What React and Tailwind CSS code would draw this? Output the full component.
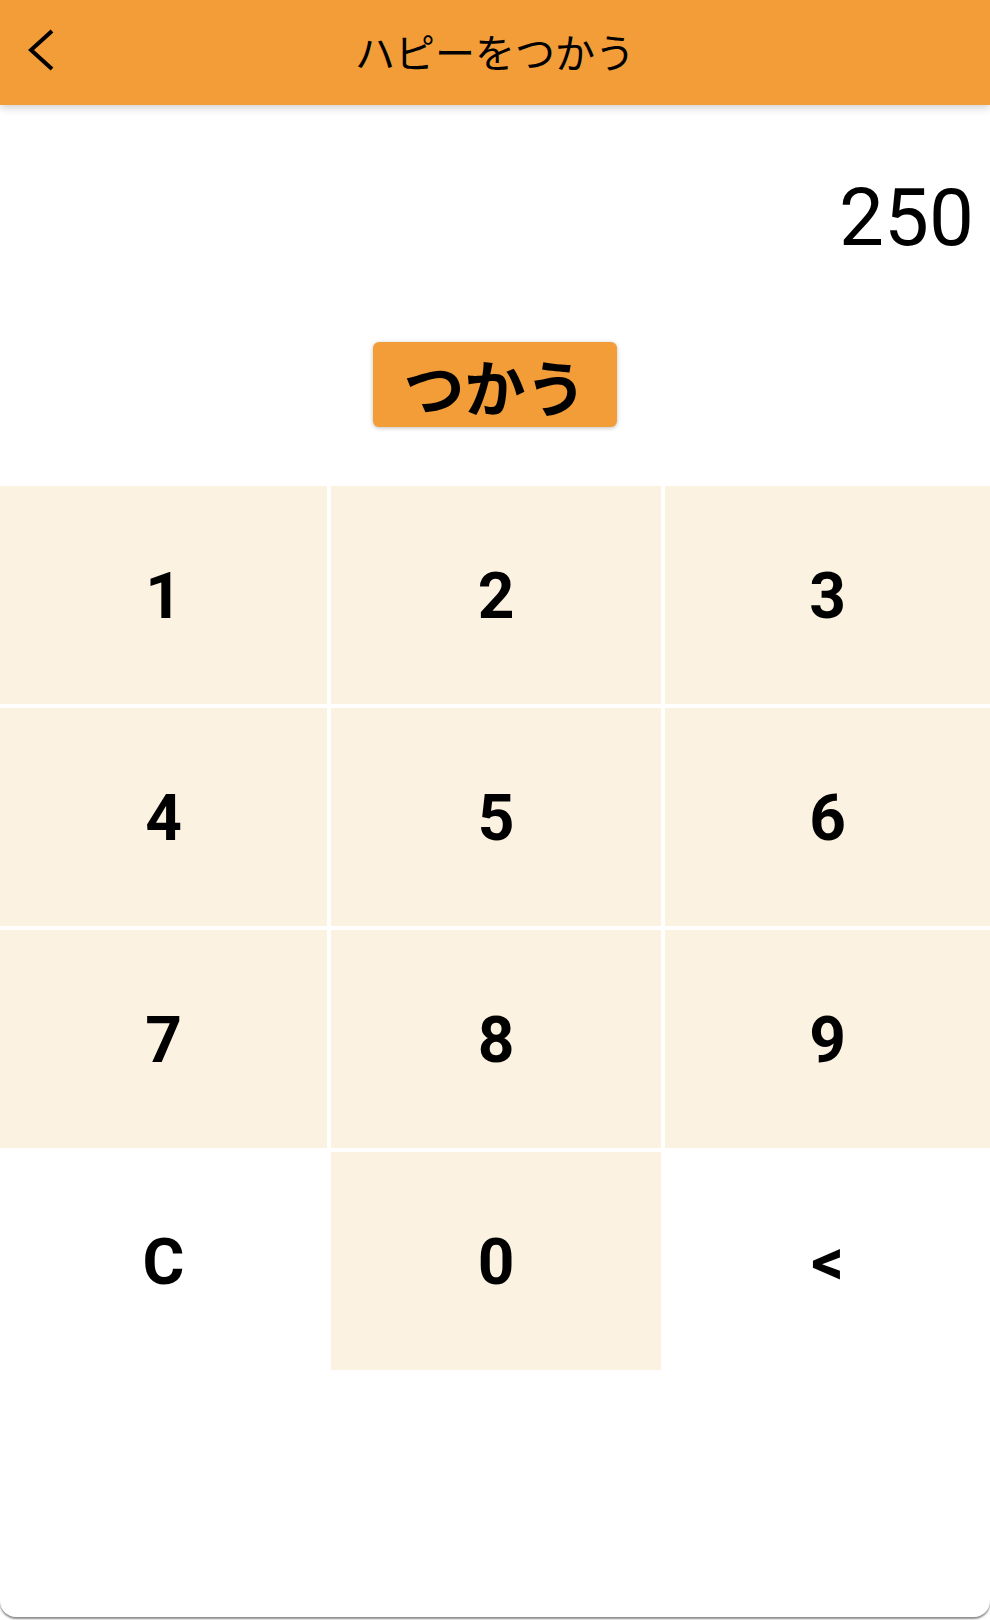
import React from "react";

const keys = [
  { label: "1", bg: true },
  { label: "2", bg: true },
  { label: "3", bg: true },
  { label: "4", bg: true },
  { label: "5", bg: true },
  { label: "6", bg: true },
  { label: "7", bg: true },
  { label: "8", bg: true },
  { label: "9", bg: true },
  { label: "C", bg: false },
  { label: "0", bg: true },
  { label: "<", bg: false },
];

export default function App() {
  return (
    <div className="w-[990px] h-[1620px] bg-white">
      <div className="h-[1617px] bg-white rounded-b-[16px] shadow-[0_2px_2px_rgba(0,0,0,0.45)] overflow-hidden flex flex-col">
        <header className="h-[105px] bg-[#F29D38] grid grid-cols-[1fr_auto_1fr] items-center shadow-[0_3px_8px_rgba(0,0,0,0.18)] relative z-10 shrink-0">
          <div className="pl-[25px] pb-[5px] flex items-center">
            <svg width="32" height="44" viewBox="0 0 32 44" fill="none">
              <path d="M27 3 L6 22 L27 41" stroke="#000" strokeWidth="4" strokeLinejoin="miter" />
            </svg>
          </div>
          <h1 className="pb-[4px] text-[40px] leading-none text-black font-normal [font-family:'Noto_Sans_CJK_JP',sans-serif]">
            ハピーをつかう
          </h1>
          <div />
        </header>

        <div className="mt-[73px] pr-[16px] text-right text-[80px] leading-none text-black [font-family:Roboto,sans-serif]">
          250
        </div>

        <div className="mt-[84px] flex justify-center">
          <button className="w-[244px] h-[85px] bg-[#F29D38] rounded-[6px] shadow-[0_1px_4px_rgba(0,0,0,0.25)] flex items-center justify-center pt-[2px] text-[61px] leading-none font-bold text-black [font-family:'Noto_Sans_CJK_JP',sans-serif]">
            つかう
          </button>
        </div>

        <div className="mt-[59px] grid grid-cols-[327px_330px_1fr] gap-[4px]">
          {keys.map((k) => (
            <div
              key={k.label}
              className={
                (k.bg ? "bg-[#FCF2E1] " : "bg-white ") +
                "h-[218px] flex items-center justify-center pt-[4px] text-[64px] leading-none font-bold text-black [font-family:Roboto,sans-serif]"
              }
            >
              {k.label}
            </div>
          ))}
        </div>
      </div>
    </div>
  );
}
